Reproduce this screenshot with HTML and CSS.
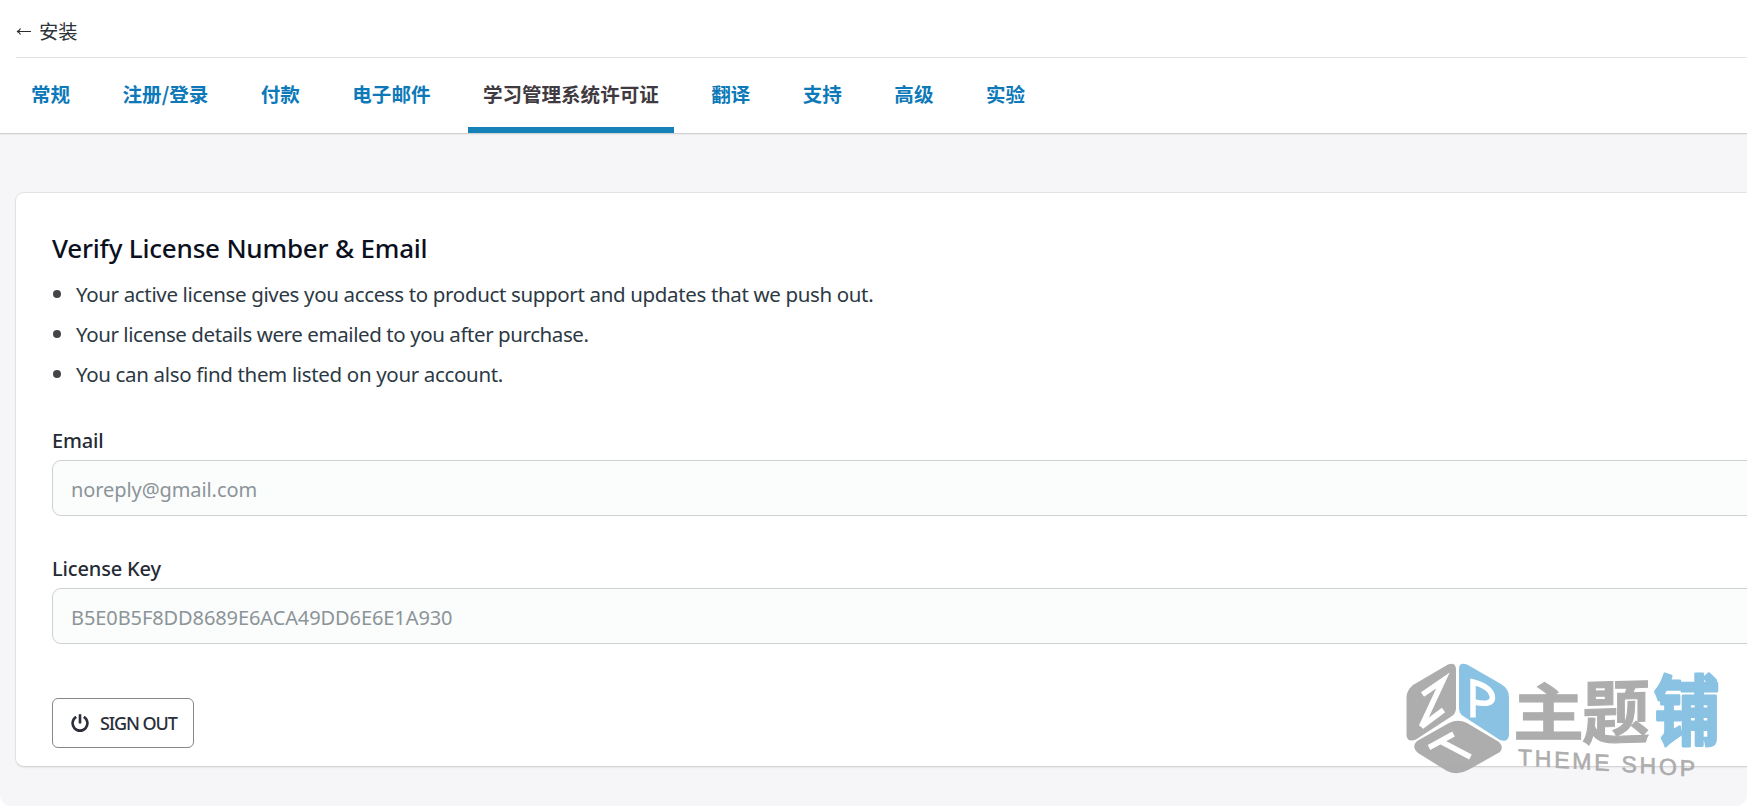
FILE: index.html
```html
<!DOCTYPE html>
<html lang="zh-CN">
<head>
<meta charset="utf-8">
<title>学习管理系统许可证</title>
<link rel="stylesheet" href="styles.css">
</head>
<body>
<div class="app">
  <header class="header">
    <a class="back"><svg class="back-arrow" viewBox="0 0 16 10"><path d="M15 5.500H1M4.500 2.500Q3.400 4.900 1 5.500Q3.400 6.100 4.500 8.500"/></svg><span>安装</span></a>
    <nav class="tabs">
      <a class="tab">常规</a>
      <a class="tab">注册/登录</a>
      <a class="tab">付款</a>
      <a class="tab">电子邮件</a>
      <a class="tab tab-active">学习管理系统许可证</a>
      <a class="tab">翻译</a>
      <a class="tab">支持</a>
      <a class="tab">高级</a>
      <a class="tab">实验</a>
    </nav>
  </header>
  <main class="card">
    <h2 class="title">Verify License Number &amp; Email</h2>
    <ul class="notes">
      <li class="note note-a">Your active license gives you access to product support and updates that we push out.</li>
      <li class="note note-b">Your license details were emailed to you after purchase.</li>
      <li class="note note-c">You can also find them listed on your account.</li>
    </ul>
    <label class="label label-email" for="email">Email</label>
    <input class="input input-email" id="email" value="noreply@gmail.com" readonly>
    <label class="label label-key" for="key">License Key</label>
    <input class="input input-key" id="key" value="B5E0B5F8DD8689E6ACA49DD6E6E1A930" readonly>
    <button class="signout"><svg class="power" viewBox="0 0 18 18"><path d="M5.2 2.9A7.4 7.4 0 1 0 12.8 2.9M9 0.2V9.6"/></svg><span>SIGN OUT</span></button>
  </main>
  <svg class="watermark" viewBox="0 0 360 166">
    <g class="wm-gray">
      <path d="M61 24.500Q69 21.500 69 30V68Q69 73 65 76L29 99.500Q20 103 19.500 95V57Q20 50 26 45Z"/>
      <path d="M62 83Q71 78.500 80 83L112 102Q117 107 113 112L82 129.500Q71 136 60 131L31 113Q24 107 30 101Z"/>
    </g>
    <path class="wm-blue" d="M72 29Q72 22 80 24.500L114 44Q122 49 122 57V95Q121 103 113 100L76 76Q72 73 72 68Z"/>
    <g class="wm-line">
      <path d="M35.500 54.500L56 40.500L34.500 86.500L56.500 70"/>
      <path d="M86 77.500V42Q105 47 105.500 58Q105 66 87 62"/>
      <path d="M66.500 94L42 107.500M53 101L83.500 117"/>
    </g>
    <text class="wm-char wm-gray" transform="matrix(1.11 0 0 .97 126 95.500)">主</text>
    <text class="wm-char wm-gray" transform="matrix(1.06 -.03 0 1.09 195 99)">题</text>
    <text class="wm-char wm-blue wm-blue-char" transform="matrix(1.03 0 0 1.19 267 99)">铺</text>
    <text class="wm-caption wm-gray" transform="matrix(1 .066 0 1 131 125)" textLength="177">THEME SHOP</text>
  </svg>
</div>
</body>
</html>
```
FILE: styles.css
```css
* { box-sizing: border-box; }
html { background: #fff; }
body {
  margin: 0;
  overflow: hidden;
  font-family: "Noto Sans", "Noto Sans CJK SC", sans-serif;
  color: #2c3338;
}
.app {
  position: relative;
  height: 806px;
  overflow: hidden;
  border-radius: 11px;
  background: #f6f6f9;
}
.header {
  height: 134px;
  padding-left: 16px;
  background: #fff;
  border-bottom: 1px solid #d0d1d3;
  box-shadow: 0 1px 1px rgba(0, 0, 0, .04);
  font-family: "Noto Sans CJK SC", sans-serif;
}
.back {
  display: flex;
  align-items: center;
  gap: 7px;
  height: 58px;
  padding-top: 5px;
  border-bottom: 1px solid #e3e3e4;
  font-size: 19.3px;
}
.back-arrow {
  width: 16px;
  height: 10px;
  fill: none;
  stroke: #2c2c30;
  stroke-width: 1.1;
}
.tabs { display: flex; gap: 22.5px; }
.tab {
  height: 75px;
  padding: 0 15px;
  line-height: 72px;
  font-size: 19.55px;
  font-weight: 700;
  color: #0d79b8;
  white-space: nowrap;
}
.tab-active {
  color: #3f3a3f;
  border-bottom: 6px solid #1680b9;
}
.card {
  display: flex;
  flex-direction: column;
  align-items: flex-start;
  width: 1780px;
  height: 575px;
  margin: 58px 0 0 15px;
  padding: 36px 0 0 36px;
  background: #fff;
  border: 1px solid #e2e2e4;
  border-bottom-color: #d4d4d6;
  border-radius: 9px;
  box-shadow: 0 1px 2px rgba(0, 0, 0, .06);
}
.title {
  margin: 0;
  font-size: 26px;
  font-weight: 500;
  line-height: 38px;
  letter-spacing: -.2px;
  color: #0b1020;
}
.notes {
  margin: 7px 0 0;
  padding: 0;
  list-style: none;
}
.note {
  display: flex;
  align-items: center;
  gap: 15px;
  height: 40px;
  padding-left: 1px;
  font-size: 20.5px;
  color: #2c3944;
  white-space: nowrap;
}
.note-a { letter-spacing: -.35px; }
.note-b { letter-spacing: -.42px; }
.note-c { letter-spacing: -.34px; }
.note::before {
  content: "";
  width: 8px;
  height: 8px;
  border-radius: 50%;
  background: #434448;
}
.label {
  height: 38px;
  margin-top: 28px;
  line-height: 38px;
  font-size: 20px;
  font-weight: 500;
  letter-spacing: -.15px;
  color: #252b35;
}
.label-key { margin-top: 34px; }
.input {
  width: 1740px;
  height: 56px;
  padding: 2px 18px 0;
  font-family: inherit;
  font-size: 20px;
  letter-spacing: -.09px;
  color: #8b9498;
  background: #fbfcfc;
  border: 1px solid #ced0d2;
  border-radius: 9px;
}
.signout {
  display: flex;
  align-items: center;
  gap: 11px;
  width: 142px;
  height: 50px;
  margin-top: 54px;
  padding: 0 0 0 18px;
  font-family: inherit;
  font-size: 18px;
  font-weight: 500;
  letter-spacing: -1.1px;
  color: #2b2f3a;
  background: #fff;
  border: 1px solid #86878b;
  border-radius: 6px;
  white-space: nowrap;
}
.power {
  width: 18px;
  height: 18px;
  fill: none;
  stroke: #2b2f3a;
  stroke-width: 2.6;
}
.watermark {
  position: absolute;
  right: 0;
  bottom: 0;
  width: 360px;
  height: 166px;
  opacity: .95;
}
.wm-gray { fill: #a9a9a9; }
.wm-blue { fill: #83bfe2; }
.wm-line { fill: none; stroke: #fff; stroke-width: 5.5; }
.wm-char {
  font-family: "Noto Sans CJK SC", sans-serif;
  font-size: 64px;
  font-weight: 700;
  stroke: #a9a9a9;
  stroke-width: 1;
}
.wm-blue-char { stroke: #83bfe2; stroke-width: 2.5; stroke-linejoin: round; }
.wm-caption {
  font-family: "Liberation Sans", sans-serif;
  font-size: 23px;
  stroke: #a9a9a9;
  stroke-width: .6;
}
```
